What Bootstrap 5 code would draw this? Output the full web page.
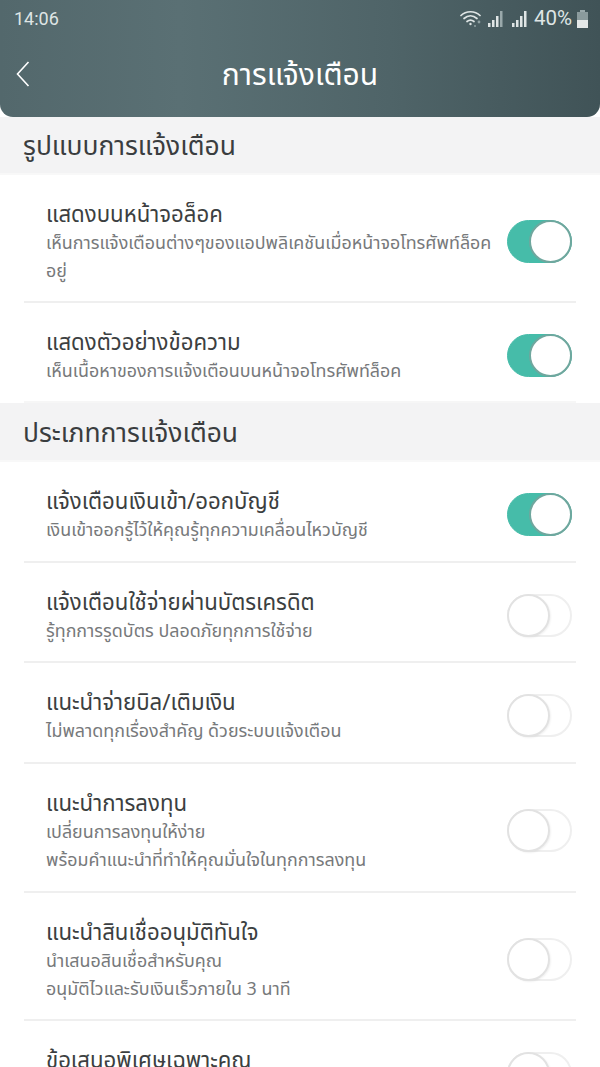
<!DOCTYPE html>
<html lang="th">
<head>
    <meta charset="UTF-8">
    <meta name="viewport" content="width=device-width, initial-scale=1.0">
    <title>การแจ้งเตือน</title>
    <link href="https://cdn.jsdelivr.net/npm/bootstrap@5.3.0/dist/css/bootstrap.min.css" rel="stylesheet">
    <style>
        html, body { height: 100%; overflow: hidden; }
        body { font-family: "Noto Sans", "Noto Sans Thai", "DejaVu Sans", sans-serif; background: #fff; }
        .app-screen { height: 1067px; overflow: hidden; }

        .top-header {
            height: 117px;
            background: linear-gradient(90deg, #53686c 0%, #5a7074 30%, #4f6468 65%, #405357 100%);
            border-radius: 0 0 13px 13px;
            color: #fff;
        }
        .status-row { height: 37px; padding: 0 11px 0 14px; color: #dfe5e5; font-family: Roboto, sans-serif; }
        .status-time { font-size: 18px; }
        .status-pct { font-size: 20.5px; margin: 0 4px 0 6px; }
        .title-row { height: 80px; padding-bottom: 7px; }
        .title-row h1 { font-size: 30px; font-weight: 400; margin: 0; line-height: 1; }
        .back-link { position: absolute; left: 16px; top: 50%; margin-top: -16px; line-height: 0; }

        .section-head {
            background: #f3f3f4;
            padding: 2px 0 0 23px;
            font-size: 26.4px;
            color: #3a3d3f;
            border-bottom: 2px solid #f8f8f8;
        }
        .head-h58 { height: 58px; }
        .head-h59 { height: 59px; }

        .setting-row { margin: 0 24px; padding: 6px 4px 0 22px; border-bottom: 2px solid #efefef; }
        .setting-row.no-line { border-bottom-color: #f6f6f6; }
        .row-h100 { height: 100px; }
        .row-h101 { height: 101px; }
        .row-h128 { height: 128px; }
        .row-h129 { height: 129px; }
        .row-title { font-size: 22.2px; line-height: 29px; color: #3c3f41; white-space: nowrap; }
        .row-sub { font-size: 17.9px; line-height: 28px; color: #77797b; white-space: nowrap; }

        .switch-track {
            flex: none;
            position: relative;
            width: 65px;
            height: 43px;
            border-radius: 22px;
            background: #46bca9;
            border: 1px solid #46bca9;
        }
        .switch-knob {
            position: absolute;
            right: -1px;
            top: -1px;
            width: 43px;
            height: 43px;
            border-radius: 50%;
            background: #fff;
            border: 2px solid #6fa79e;
        }
        .switch-track.is-off { background: #fff; border: 2px solid #efefef; }
        .switch-track.is-off .switch-knob {
            left: -2px;
            right: auto;
            top: -2px;
            border: 2px solid #e2e2e2;
            box-shadow: 1px 1px 2px rgba(0, 0, 0, .06);
        }
    </style>
</head>
<body>
    <div class="app-screen">
        <!-- Header -->
        <div class="top-header">
            <div class="status-row d-flex align-items-center justify-content-between">
                <span class="status-time">14:06</span>
                <span class="d-flex align-items-center">
                    <svg class="me-1" width="24" height="20" viewBox="0 0 24 20" fill="none" stroke="#dfe5e5" stroke-width="1.7" stroke-linecap="round">
                        <path d="M1 6.5 C6 1.5 15 1.5 20 6.5"/>
                        <path d="M4 9.5 C8 6 13 6 17 9.5"/>
                        <path d="M7 12.5 C9.5 10.5 11.5 10.5 14 12.5"/>
                        <circle cx="10.5" cy="15" r="1.2" fill="#dfe5e5" stroke="none"/>
                        <circle cx="15" cy="17" r="1" fill="#8fa0a2" stroke="none"/>
                        <circle cx="19" cy="13" r="1.4" fill="#8fa0a2" stroke="none"/>
                    </svg>
                    <svg class="me-2" width="16" height="18" viewBox="0 0 16 18" fill="#dfe5e5">
                        <rect x="0" y="13" width="2.5" height="4"/>
                        <rect x="4" y="10" width="2.5" height="7"/>
                        <rect x="8" y="6" width="2.5" height="11"/>
                        <rect x="12" y="1" width="2.5" height="16" fill="#9aa9ab"/>
                    </svg>
                    <svg width="16" height="18" viewBox="0 0 16 18" fill="#dfe5e5">
                        <rect x="0" y="13" width="2.5" height="4"/>
                        <rect x="4" y="10" width="2.5" height="7"/>
                        <rect x="8" y="6" width="2.5" height="11"/>
                        <rect x="12" y="1" width="2.5" height="16"/>
                    </svg>
                    <span class="status-pct">40%</span>
                    <svg width="13" height="20" viewBox="0 0 13 20">
                        <rect x="4" y="1" width="5" height="2" fill="#9aa9ab"/>
                        <rect x="1" y="3" width="11" height="16" fill="#8b9b9d"/>
                        <rect x="1" y="11" width="11" height="8" fill="#e4e8e8"/>
                    </svg>
                </span>
            </div>
            <div class="title-row position-relative d-flex align-items-center justify-content-center">
                <a class="back-link" href="#">
                    <svg width="14" height="26" viewBox="0 0 14 26" fill="none" stroke="#fff" stroke-width="1.6">
                        <path d="M12.5 1 L1.5 13 L12.5 25"/>
                    </svg>
                </a>
                <h1>การแจ้งเตือน</h1>
            </div>
        </div>

        <!-- Section: รูปแบบ -->
        <div class="section-head head-h58 d-flex align-items-center">รูปแบบการแจ้งเตือน</div>

        <div class="setting-row row-h128 d-flex align-items-center justify-content-between gap-3">
            <div>
                <div class="row-title">แสดงบนหน้าจอล็อค</div>
                <div class="row-sub">เห็นการแจ้งเตือนต่างๆของแอปพลิเคชันเมื่อหน้าจอโทรศัพท์ล็อค<br>อยู่</div>
            </div>
            <div class="switch-track"><div class="switch-knob"></div></div>
        </div>
        <div class="setting-row row-h100 no-line d-flex align-items-center justify-content-between gap-3">
            <div>
                <div class="row-title">แสดงตัวอย่างข้อความ</div>
                <div class="row-sub">เห็นเนื้อหาของการแจ้งเตือนบนหน้าจอโทรศัพท์ล็อค</div>
            </div>
            <div class="switch-track"><div class="switch-knob"></div></div>
        </div>

        <!-- Section: ประเภท -->
        <div class="section-head head-h59 d-flex align-items-center">ประเภทการแจ้งเตือน</div>

        <div class="setting-row row-h101 d-flex align-items-center justify-content-between gap-3">
            <div>
                <div class="row-title">แจ้งเตือนเงินเข้า/ออกบัญชี</div>
                <div class="row-sub">เงินเข้าออกรู้ไว้ให้คุณรู้ทุกความเคลื่อนไหวบัญชี</div>
            </div>
            <div class="switch-track"><div class="switch-knob"></div></div>
        </div>
        <div class="setting-row row-h100 d-flex align-items-center justify-content-between gap-3">
            <div>
                <div class="row-title">แจ้งเตือนใช้จ่ายผ่านบัตรเครดิต</div>
                <div class="row-sub">รู้ทุกการรูดบัตร ปลอดภัยทุกการใช้จ่าย</div>
            </div>
            <div class="switch-track is-off"><div class="switch-knob"></div></div>
        </div>
        <div class="setting-row row-h101 d-flex align-items-center justify-content-between gap-3">
            <div>
                <div class="row-title">แนะนำจ่ายบิล/เติมเงิน</div>
                <div class="row-sub">ไม่พลาดทุกเรื่องสำคัญ ด้วยระบบแจ้งเตือน</div>
            </div>
            <div class="switch-track is-off"><div class="switch-knob"></div></div>
        </div>
        <div class="setting-row row-h129 d-flex align-items-center justify-content-between gap-3">
            <div>
                <div class="row-title">แนะนำการลงทุน</div>
                <div class="row-sub">เปลี่ยนการลงทุนให้ง่าย<br>พร้อมคำแนะนำที่ทำให้คุณมั่นใจในทุกการลงทุน</div>
            </div>
            <div class="switch-track is-off"><div class="switch-knob"></div></div>
        </div>
        <div class="setting-row row-h128 d-flex align-items-center justify-content-between gap-3">
            <div>
                <div class="row-title">แนะนำสินเชื่ออนุมัติทันใจ</div>
                <div class="row-sub">นำเสนอสินเชื่อสำหรับคุณ<br>อนุมัติไวและรับเงินเร็วภายใน 3 นาที</div>
            </div>
            <div class="switch-track is-off"><div class="switch-knob"></div></div>
        </div>
        <div class="setting-row row-h100 d-flex align-items-center justify-content-between gap-3">
            <div>
                <div class="row-title">ข้อเสนอพิเศษเฉพาะคุณ</div>
                <div class="row-sub">&nbsp;</div>
            </div>
            <div class="switch-track is-off"><div class="switch-knob"></div></div>
        </div>
    </div>

    <script src="https://cdn.jsdelivr.net/npm/bootstrap@5.3.0/dist/js/bootstrap.bundle.min.js"></script>
</body>
</html>
